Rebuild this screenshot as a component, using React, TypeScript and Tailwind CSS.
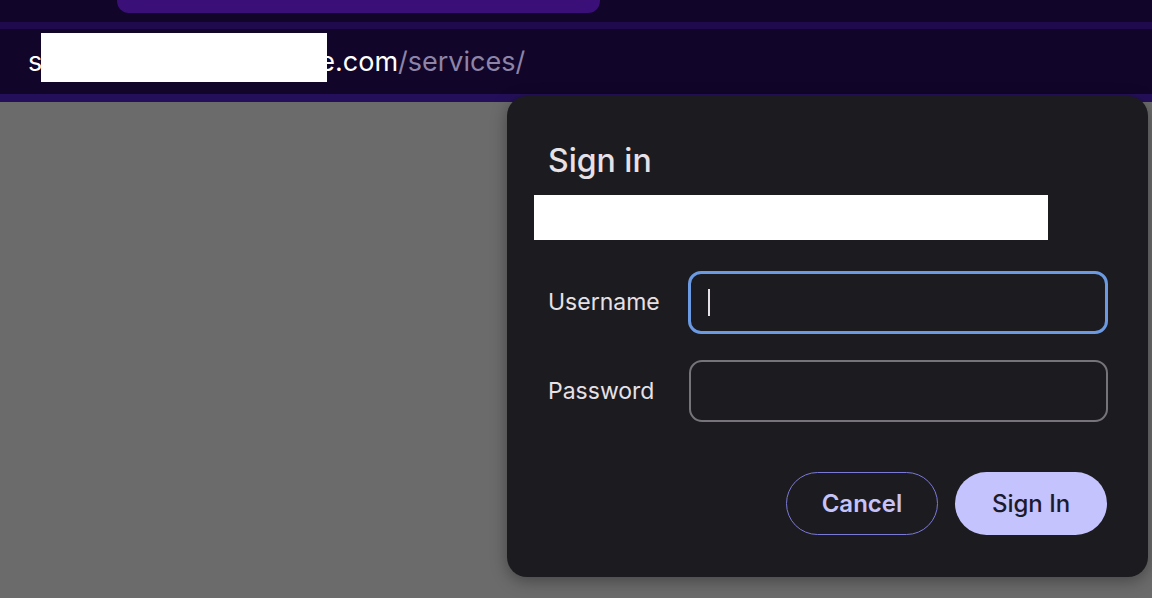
export default function App() {
  return (
    <div className="relative w-[1152px] h-[598px] overflow-hidden bg-[#6b6b6b] font-['Inter',sans-serif]">
      {/* browser chrome */}
      <div className="bg-[#110529]">
        <div className="h-[22px] pl-[117px]">
          <div className="w-[483px] h-[13px] rounded-b-[12px] bg-[#3a0f78]" />
        </div>
        <div className="h-[7px] bg-[#1e0a4c]" />
        <div className="h-[65px] flex items-center pl-[28px] text-[27px] leading-none">
          <span className="relative text-white">
            s<span className="inline-block w-[277px]" />e.com
            <span className="absolute left-[13px] top-[-15px] w-[286px] h-[49px] bg-white" />
          </span>
          <span className="text-[#8d84a8]">/services/</span>
        </div>
        <div className="h-[8px] bg-[#24105a]" />
      </div>

      {/* sign-in dialog */}
      <div className="absolute left-[507px] top-[96px] w-[641px] h-[481px] rounded-[20px] bg-[#1c1b1f] shadow-[0_4px_16px_rgba(0,0,0,0.35)] pl-[41px] pr-[40px] pt-[47px]">
        <h2 className="text-[32px] font-medium text-[#e6e1e6] leading-[36px]">Sign in</h2>
        <div className="mt-[16px] ml-[-14px] w-[514px] h-[45px] bg-white" />

        <div className="mt-[31px] flex flex-col gap-[26px]">
          <div className="flex items-center">
            <label className="w-[140px] text-[23px] text-[#e6e1e6]">Username</label>
            <div className="flex items-center w-[421px] h-[63px] rounded-[13px] border-[3px] border-[#6b9ae2] pl-[17px]">
              <div className="w-[2px] h-[27px] bg-[#e6e1e6]" />
            </div>
          </div>
          <div className="flex items-center">
            <label className="w-[141px] text-[23px] text-[#e6e1e6]">Password</label>
            <div className="w-[419px] h-[62px] rounded-[13px] border-2 border-[#76747a]" />
          </div>
        </div>

        <div className="mt-[50px] flex justify-end gap-[17px] pr-[1px]">
          <button className="w-[152px] h-[63px] rounded-full border border-[#7b79d6] text-[24px] font-semibold text-[#c5c3fa]">
            Cancel
          </button>
          <button className="w-[152px] h-[63px] rounded-full bg-[#c4c3fd] text-[24px] font-medium text-[#1c1b2c]">
            Sign In
          </button>
        </div>
      </div>
    </div>
  )
}
